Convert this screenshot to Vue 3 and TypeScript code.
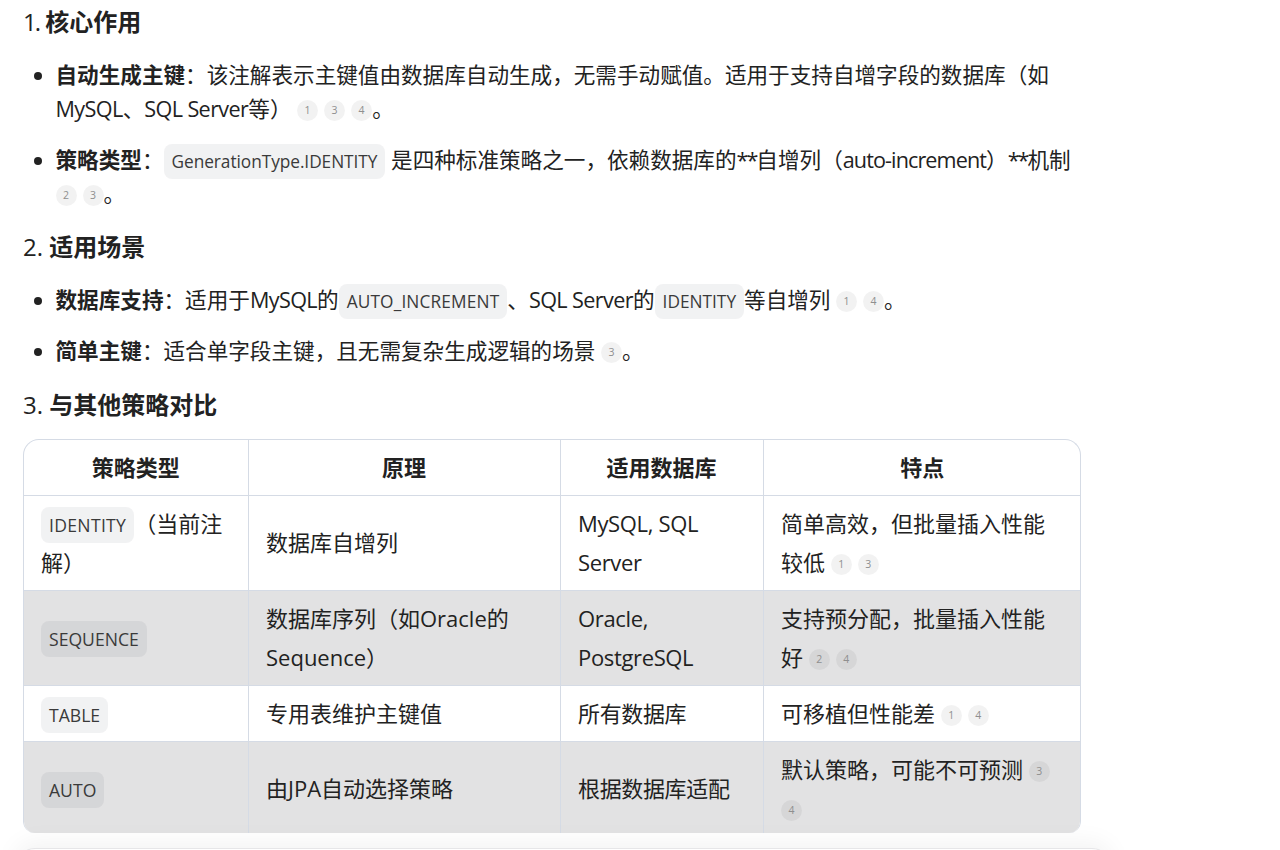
<script setup lang="ts">
interface Row {
  c1: string
  c1b?: string
  c2: string
  c3: string
  c4: string
  c4c: number[]
}
const rows: Row[] = [
  { c1: 'IDENTITY', c1b: '（当前注解）', c2: '数据库自增列', c3: 'MySQL, SQL Server', c4: '简单高效，但批量插入性能较低', c4c: [1, 3] },
  { c1: 'SEQUENCE', c2: '数据库序列（如Oracle的Sequence）', c3: 'Oracle, PostgreSQL', c4: '支持预分配，批量插入性能好', c4c: [2, 4] },
  { c1: 'TABLE', c2: '专用表维护主键值', c3: '所有数据库', c4: '可移植但性能差', c4c: [1, 4] },
  { c1: 'AUTO', c2: '由JPA自动选择策略', c3: '根据数据库适配', c4: '默认策略，可能不可预测', c4c: [3, 4] }
]
</script>

<template>
  <div class="page">
    <div class="content">
      <h3 class="first"><span class="n1">1.</span> <strong>核心作用</strong></h3>
      <ul class="u1">
        <li><strong>自动生成主键</strong>：该注解表示主键值由数据库自动生成，无需手动赋值。适用于支持自增字段的数据库（如<span class="l">MySQL</span>、<span class="l">SQL Server</span>等） <i class="chip">1</i><i class="chip">3</i><i class="chip">4</i>。</li>
        <li><strong>策略类型</strong>：<code class="g">GenerationType.IDENTITY</code> 是四种标准策略之一，依赖数据库的<span class="s">**</span>自增列（<span class="a">auto-increment</span>）<span class="s">**</span>机制 <i class="chip">2</i><i class="chip">3</i>。</li>
      </ul>
      <h3>2. <strong>适用场景</strong></h3>
      <ul class="u2">
        <li><strong>数据库支持</strong>：适用于<span class="l">MySQL</span>的<code class="w">AUTO_INCREMENT</code>、<span class="l">SQL Server</span>的<code>IDENTITY</code>等自增列 <i class="chip">1</i><i class="chip">4</i>。</li>
        <li><strong>简单主键</strong>：适合单字段主键，且无需复杂生成逻辑的场景 <i class="chip">3</i>。</li>
      </ul>
      <h3>3. <strong>与其他策略对比</strong></h3>
      <div class="table-wrap">
        <table>
          <colgroup>
            <col class="w1" /><col class="w2" /><col class="w3" /><col class="w4" />
          </colgroup>
          <thead>
            <tr><th>策略类型</th><th>原理</th><th>适用数据库</th><th>特点</th></tr>
          </thead>
          <tbody>
            <tr v-for="r in rows" :key="r.c1">
              <td><code :class="{ id: r.c1b }">{{ r.c1 }}</code><template v-if="r.c1b"> {{ r.c1b }}</template></td>
              <td>{{ r.c2 }}</td>
              <td><span class="t">{{ r.c3 }}</span></td>
              <td>{{ r.c4 }} <i v-for="n in r.c4c" :key="n" class="chip">{{ n }}</i></td>
            </tr>
          </tbody>
        </table>
      </div>
    </div>
    <div class="composer"></div>
  </div>
</template>

<style>
html, body { margin: 0; background: #fff; }
</style>

<style scoped>
.page {
  position: relative;
  width: 1280px;
  height: 850px;
  overflow: hidden;
  background: #fff;
  color: #222;
  font-family: "Open Sans", "Noto Sans CJK SC", sans-serif;
  font-size: 22px;
}
.content {
  width: 1058px;
  margin-left: 23px;
}
h3 {
  margin: 0;
  font-size: 24px;
  font-weight: 400;
  line-height: 36px;
  height: 36px;
}
h3.first { margin-top: 4px; }
.n1 { letter-spacing: -2px; }
strong { font-weight: 700; }
.l { letter-spacing: -0.6px; }
.t { letter-spacing: -0.35px; }
.a { letter-spacing: -0.9px; }
.s { letter-spacing: -2px; }
ul {
  list-style: disc;
  font-size: 21.6px;
}
.u1 { margin: 17.5px 0 0; padding: 0 0 1px 32.5px; }
.u2 { margin: 18.3px 0 0; padding: 0 0 2.7px 32.5px; }
li {
  line-height: 34.56px;
  margin-bottom: 16px;
}
code {
  font-family: inherit;
  font-size: 17.6px;
  line-height: 20px;
  background: rgba(0, 10, 30, 0.055);
  border-radius: 8px;
  padding: 6px 8px;
  color: #3a3a3a;
}
li code { font-size: 17.28px; }
code.g { letter-spacing: -0.05px; }
code.w { letter-spacing: 0.15px; }
code.id { letter-spacing: 0.3px; }
.chip {
  display: inline-block;
  width: 21px;
  height: 21px;
  line-height: 21px;
  margin-right: 6px;
  vertical-align: 3px;
  border-radius: 50%;
  background: rgba(0, 0, 0, 0.05);
  color: #8f8f8f;
  font-size: 10.5px;
  font-style: normal;
  text-align: center;
}
.chip:last-of-type { margin-right: 0; }
.table-wrap {
  margin-top: 16px;
  height: 394px;
  border: 1px solid #d5dbe5;
  border-bottom: 0;
  border-radius: 16px 16px 12px 12px;
  overflow: hidden;
  box-sizing: border-box;
  width: 1058px;
}
table {
  border-collapse: collapse;
  table-layout: fixed;
  width: 1057px;
}
.w1 { width: 224px; }
.w2 { width: 312px; }
.w3 { width: 203px; }
.w4 { width: 318px; }
th, td {
  border: 1px solid #d5dbe5;
  padding: 8px 17.5px;
  line-height: 39px;
  text-align: left;
}
td:first-child { padding-left: 17px; }
th { border-top: 0; text-align: center; font-weight: 700; }
th:first-child, td:first-child { border-left: 0; }
th:last-child, td:last-child { border-right: 0; }
tbody tr:nth-child(even) td { background: #e2e2e3; }
tbody tr:last-child td { border-bottom: 0; }
.composer {
  position: absolute;
  left: 15px;
  top: 848px;
  width: 1095px;
  height: 100px;
  background: #fff;
  border: 1px solid #e6e6e8;
  border-radius: 20px;
  box-shadow: 0 -6px 24px rgba(0, 0, 0, 0.05);
}
</style>
